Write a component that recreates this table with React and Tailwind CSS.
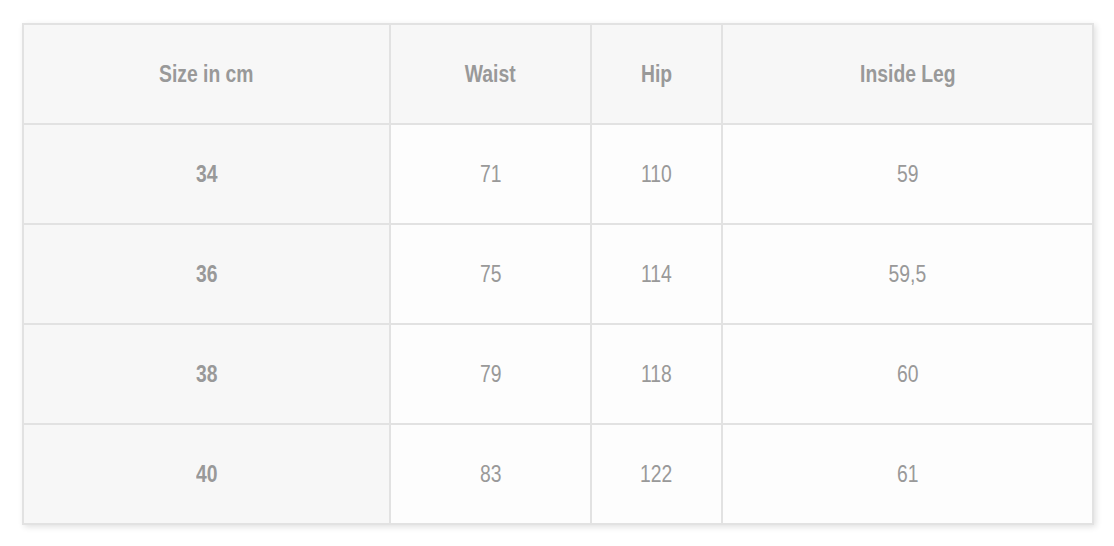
import React from "react";

const rows = [
  ["34", "71", "110", "59"],
  ["36", "75", "114", "59,5"],
  ["38", "79", "118", "60"],
  ["40", "83", "122", "61"],
];

// the reference font is a condensed sans; squeeze Liberation Sans to match
function Txt({ children }) {
  return <span className="inline-block scale-x-[0.84]">{children}</span>;
}

export default function App() {
  return (
    <div className="bg-white min-h-screen pl-[22px] pt-[23px] font-['Liberation_Sans',Arial,sans-serif] text-[#999]">
      <table className="table-fixed border-collapse w-[1070px] shadow-[2px_2px_6px_rgba(0,0,0,0.12)]">
        <colgroup>
          <col className="w-[367px]" />
          <col className="w-[201px]" />
          <col className="w-[131px]" />
          <col className="w-[371px]" />
        </colgroup>
        <thead>
          <tr className="h-[100px] bg-[#f7f7f7]">
            {["Size in cm", "Waist", "Hip", "Inside Leg"].map((h) => (
              <th key={h} className="border-2 border-[#e2e2e2] text-[23px] font-bold text-center">
                <Txt>{h}</Txt>
              </th>
            ))}
          </tr>
        </thead>
        <tbody>
          {rows.map((r) => (
            <tr key={r[0]} className="h-[100px] bg-[#fdfdfd]">
              <th className="border-2 border-[#e2e2e2] bg-[#f7f7f7] text-[23px] font-bold text-center">
                <Txt>{r[0]}</Txt>
              </th>
              {r.slice(1).map((c, i) => (
                <td key={i} className="border-2 border-[#e2e2e2] text-[23px] text-center">
                  <Txt>{c}</Txt>
                </td>
              ))}
            </tr>
          ))}
        </tbody>
      </table>
    </div>
  );
}
